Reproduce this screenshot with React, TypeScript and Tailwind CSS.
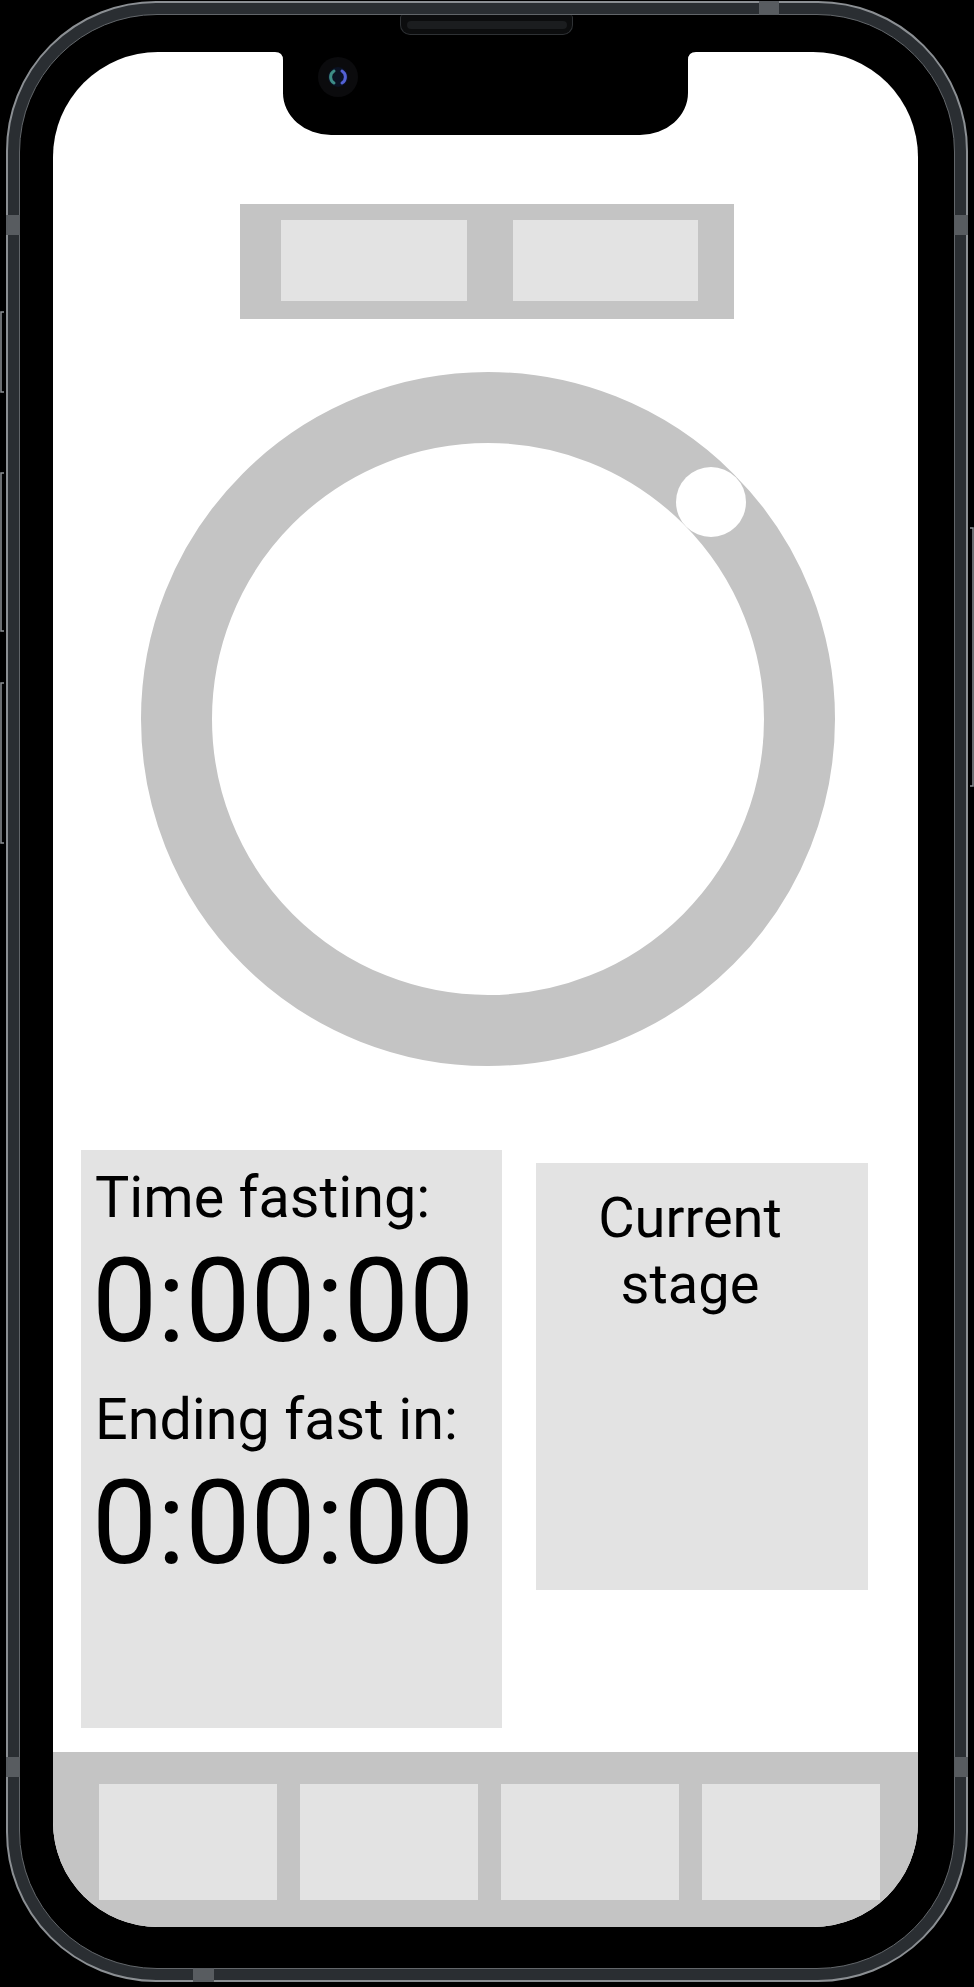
const navSlots = ["home", "history", "stats", "profile"];

// black notch with camera, drawn over the top of the screen
function Notch() {
  return (
    <svg className="absolute left-[222px] top-0" width="421" height="83" viewBox="0 0 421 83">
      <path d="M0 0H421Q413 0 413 8V41A48 42 0 0 1 365 83H56A48 42 0 0 1 8 41V8Q8 0 0 0Z" fill="#000" />
      <circle cx="63" cy="25" r="20" fill="#0b0b0d" />
      <circle cx="63" cy="25" r="10" fill="#0b1224" />
      <path d="M59 19a7 7 0 0 0 0 12" stroke="#3d8c87" strokeWidth="3" fill="none" strokeLinecap="round" />
      <path d="M67 19a7 7 0 0 1 0 12" stroke="#5361d4" strokeWidth="3" fill="none" strokeLinecap="round" />
    </svg>
  );
}

// antenna breaks + side buttons of the device frame
function FrameDetails() {
  const band = "#585c60";
  const btn = "#8c9094";
  return (
    <svg className="pointer-events-none absolute inset-0" width="974" height="1987" viewBox="0 0 974 1987">
      <rect x="759" y="1" width="20" height="14" fill={band} />
      <rect x="193" y="1968" width="21" height="14" fill={band} />
      <rect x="6" y="215" width="14" height="20" fill={band} />
      <rect x="6" y="1757" width="14" height="20" fill={band} />
      <rect x="954" y="215" width="14" height="20" fill={band} />
      <rect x="954" y="1757" width="14" height="20" fill={band} />
      <path d="M4 312H1V392H4M4 473H1V631H4M4 683H1V843H4" stroke={btn} strokeWidth="1.5" fill="none" />
      <path d="M970 528H973V786H970" stroke={btn} strokeWidth="1.5" fill="none" />
    </svg>
  );
}

function TimerCard() {
  return (
    <div className="h-[578px] w-[421px] bg-[#e3e3e3] pl-[14px] pt-[13px] text-black">
      <p className="text-[57.5px] leading-[70px]">Time fasting:</p>
      <p className="-ml-[3px] text-[116px] leading-[136px]">0:00:00</p>
      <p className="mt-[16px] text-[57.5px] leading-[70px]">Ending fast in:</p>
      <p className="-ml-[3px] text-[116px] leading-[136px]">0:00:00</p>
    </div>
  );
}

function StageCard() {
  return (
    <div className="mt-[13px] h-[427px] w-[332px] bg-[#e3e3e3] pr-[24px] pt-[22px] text-center text-black">
      <p className="text-[56px] leading-[66px]">
        Current
        <br />
        stage
      </p>
    </div>
  );
}

function Screen() {
  return (
    <div className="relative flex h-[1875px] w-[865px] flex-col overflow-hidden rounded-[105px] bg-white">
      <Notch />

      {/* Segmented toggle */}
      <div className="ml-[187px] mt-[152px] flex h-[115px] w-[494px] gap-[46px] bg-[#c4c4c4] pl-[41px] pt-[16px]">
        <div className="h-[81px] w-[186px] bg-[#e3e3e3]" />
        <div className="h-[81px] w-[185px] bg-[#e3e3e3]" />
      </div>

      {/* Progress ring */}
      <div className="relative ml-[88px] mt-[53px] h-[694px] w-[694px]">
        <div className="h-full w-full rounded-full border-[71px] border-[#c4c4c4]" />
        <div className="absolute left-[535px] top-[95px] h-[70px] w-[70px] rounded-full bg-white" />
      </div>

      <div className="mt-[84px] flex items-start gap-[34px] pl-[28px]">
        <TimerCard />
        <StageCard />
      </div>

      {/* Bottom nav */}
      <div className="mt-auto flex h-[175px] shrink-0 gap-[23px] bg-[#c4c4c4] pl-[46px] pt-[32px]">
        {navSlots.map((slot) => (
          <div key={slot} className="h-[116px] w-[178px] bg-[#e3e3e3]" />
        ))}
      </div>
    </div>
  );
}

export default function App() {
  return (
    <div className="relative h-[1987px] w-[974px] overflow-hidden bg-black [font-family:Roboto,sans-serif]">
      <div className="ml-[6px] mt-[1px] h-[1981px] w-[962px] rounded-[150px] border-2 border-[#8b8f93] bg-[#2a2e32] p-[11px]">
        <div className="flex h-full w-full flex-col items-start rounded-[138px] border border-[#62666a] bg-black pl-[33px]">
          {/* speaker grille */}
          <div className="ml-[347px] flex h-[20px] w-[173px] shrink-0 items-center justify-center rounded-b-[10px] rounded-t-[3px] border border-t-0 border-[#2e3134] bg-[#0c0d0e]">
            <div className="h-[8px] w-[160px] rounded-full bg-[#1b1d1f]" />
          </div>
          <div className="mt-[17px]">
            <Screen />
          </div>
        </div>
      </div>
      <FrameDetails />
    </div>
  );
}
